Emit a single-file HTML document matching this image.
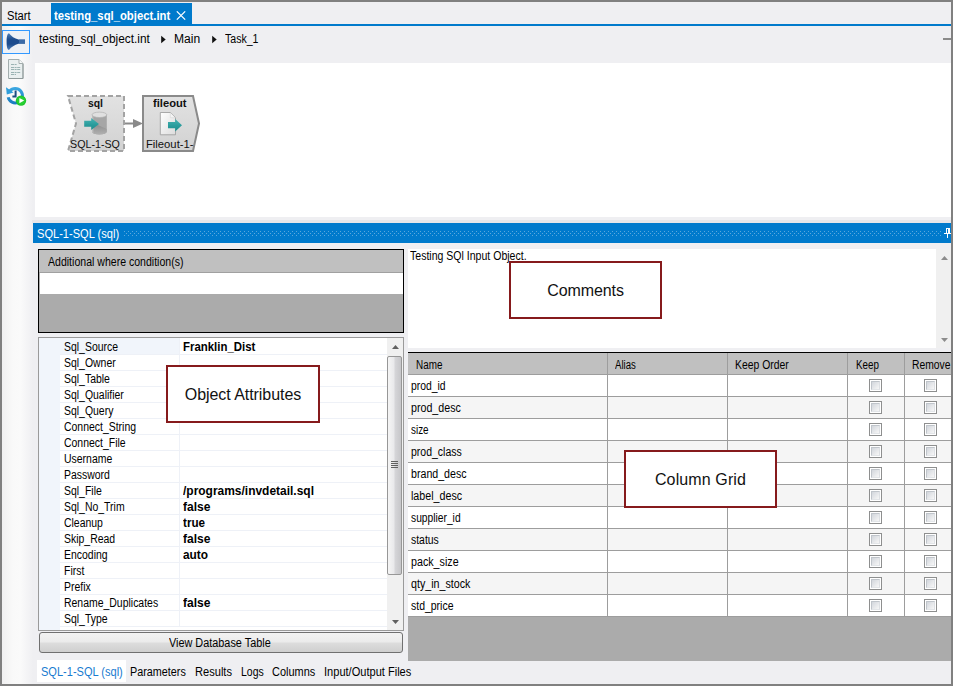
<!DOCTYPE html>
<html><head><meta charset="utf-8">
<style>
html,body{margin:0;padding:0;}
body{width:953px;height:686px;overflow:hidden;background:#efeff2;font-family:"Liberation Sans",sans-serif;position:relative;}
.a{position:absolute;}
.t{position:absolute;white-space:nowrap;line-height:1;}
.seg{font-size:12px;color:#000;}
.ms{font-size:11px;color:#000;}
.frame{left:0;top:0;width:949px;height:682px;border:2px solid #808080;pointer-events:none;z-index:50;}
.pl{position:absolute;left:64px;font-size:11px;white-space:nowrap;line-height:1;color:#000;}
.pv{position:absolute;left:183px;font-size:11px;font-weight:bold;white-space:nowrap;line-height:1;color:#000;}
.row{position:absolute;left:408px;width:543px;height:21px;border-bottom:1px solid #9d9d9d;background:#fff;}
.row.alt{background:#f5f5f5;}
.row span{position:absolute;left:2.5px;top:5px;font-size:12px;line-height:1;white-space:nowrap;}
.cb{position:absolute;top:4px;width:11px;height:11px;border:1px solid #8e8f8f;background:#fff;}
.cb i{position:absolute;left:1px;top:1px;width:9px;height:9px;box-sizing:border-box;border:1px solid;border-color:#c0c5cb #dde0e4 #e2e5e8 #c0c5cb;background:linear-gradient(135deg,#d2d6dc,#f7f7f7);}
.ann{position:absolute;border:2px solid #861a1c;background:#fff;font-size:16px;color:#111;text-align:center;box-sizing:border-box;}
</style></head><body>
<!-- left strip gradient -->
<div class="a" style="left:2px;top:26px;width:31px;height:658px;background:linear-gradient(90deg,#f0f0f1 0,#f9f9f9 35%,#fafafa 60%,#efeff2 100%);"></div>

<!-- top tabs -->
<div class="t seg" id="tStart" style="transform:scaleX(0.9312);transform-origin:0 0;left:7.3px;top:10px;">Start</div>
<div class="a" style="left:51px;top:3px;width:141px;height:21px;background:#007acc;"></div>
<div class="t seg" id="tTab" style="transform:scaleX(0.942);transform-origin:0 0;left:54.2px;top:10px;color:#fff;font-weight:bold;">testing_sql_object.int</div>
<svg class="a" style="left:176px;top:11px;" width="10" height="9" viewBox="0 0 10 9"><path d="M0.8 0.4 L9.2 8.6 M9.2 0.4 L0.8 8.6" stroke="#fff" stroke-width="1.25" fill="none"/></svg>
<div class="a" style="left:2px;top:24px;width:949px;height:2px;background:#007acc;"></div>

<!-- breadcrumb -->
<div class="t seg" id="b1" style="transform:scaleX(0.9886);transform-origin:0 0;left:39.3px;top:33px;">testing_sql_object.int</div>
<svg class="a" style="left:161px;top:35px;" width="5" height="9"><path d="M0.2 0.7 L4.7 4.5 L0.2 8.3Z" fill="#111"/></svg>
<div class="t seg" id="b2" style="transform:scaleX(1.0071);transform-origin:0 0;left:174.3px;top:33px;">Main</div>
<svg class="a" style="left:212px;top:35px;" width="5" height="9"><path d="M0.2 0.7 L4.7 4.5 L0.2 8.3Z" fill="#111"/></svg>
<div class="t seg" id="b3" style="transform:scaleX(0.8809);transform-origin:0 0;left:225.2px;top:33px;">Task_1</div>
<div class="a" style="left:943px;top:38px;width:8px;height:2px;background:#8a8a8a;"></div>

<!-- left toolbar icons -->
<div class="a" style="left:2px;top:30px;width:28px;height:24px;border:1px solid #3399ff;background:#eef1f6;box-sizing:border-box;"></div>
<svg class="a" style="left:5px;top:32px;" width="22" height="20" viewBox="5 32 22 20"><defs><linearGradient id="fg" x1="0" y1="0" x2="0" y2="1"><stop offset="0" stop-color="#4f7fb8"/><stop offset="0.35" stop-color="#1d4c8e"/><stop offset="0.65" stop-color="#1d4c8e"/><stop offset="1" stop-color="#4f7fb8"/></linearGradient></defs><path d="M9 33.3 C7.2 33.3 6.6 37 6.6 41.6 C6.6 46.2 7.2 49.9 9 49.9 Q12.5 45.4 18.5 43.7 L25 43.7 L25 39.6 L18.5 39.6 Q12.5 37.9 9 33.3Z" fill="url(#fg)"/><rect x="19" y="39.6" width="6" height="4.1" fill="#4877b2" opacity="0.7"/></svg>
<svg class="a" style="left:8px;top:59px;" width="16" height="20" viewBox="0 0 16 20"><path d="M0.5 0.5 H11 L15 4.5 V19.5 H0.5Z" fill="#e9efef" stroke="#a3adad"/><path d="M11 0.5 V4.5 H15" fill="#f8fafa" stroke="#a3adad"/><path d="M15 5 V19.5 H1" fill="none" stroke="#8f9a9a" stroke-width="1"/><g stroke="#9ab3b3" stroke-width="1" stroke-dasharray="3 0.6 2 0.6"><path d="M3 5.5H9M3 8.5H12.5M3 10.5H12.5M3 13.5H12.5M3 15.5H8"/></g></svg>
<svg class="a" style="left:5px;top:85px;" width="22" height="22" viewBox="0 0 22 22"><defs><linearGradient id="cg" x1="0" y1="0" x2="0" y2="1"><stop offset="0" stop-color="#3aa6e0"/><stop offset="1" stop-color="#1a7cc0"/></linearGradient></defs><path d="M4.6 6.2 A7.2 7.2 0 1 1 3.2 12.2" fill="none" stroke="url(#cg)" stroke-width="3"/><path d="M1 2.2 L1.8 9.6 L8.6 7.4Z" fill="#2f9edb"/><path d="M10.6 5.6 V11.4 H7.4" fill="none" stroke="#1c4c80" stroke-width="2"/><circle cx="16" cy="15.6" r="5.2" fill="#1fc42c"/><circle cx="16" cy="15.6" r="4.2" fill="#27d033"/><path d="M14.4 12.9 L19.2 15.6 L14.4 18.3Z" fill="#fff"/></svg>

<!-- canvas -->
<div class="a" style="left:35px;top:63px;width:916px;height:154px;background:#fff;"></div>
<div class="a" style="left:32px;top:220px;width:919px;height:3px;background:#e6e6e9;"></div>

<!-- flow nodes -->
<svg class="a" style="left:60px;top:90px;" width="150" height="70" viewBox="60 90 150 70">
 <defs><linearGradient id="ng" x1="0" y1="0" x2="0" y2="1"><stop offset="0" stop-color="#e2e2e2"/><stop offset="1" stop-color="#d2d2d2"/></linearGradient>
 <linearGradient id="cy" x1="0" y1="0" x2="1" y2="0"><stop offset="0" stop-color="#c8c8c8"/><stop offset="0.5" stop-color="#b0b0b0"/><stop offset="1" stop-color="#8c8c8c"/></linearGradient>
 <linearGradient id="fl" x1="0" y1="0" x2="1" y2="1"><stop offset="0" stop-color="#ffffff"/><stop offset="1" stop-color="#dcdcdc"/></linearGradient></defs>
 <path d="M68 96 H124 V151 H68 L76 123.5Z" fill="url(#ng)" stroke="#a3a3a3" stroke-width="2" stroke-dasharray="5 3"/>
 <path d="M143 96 H193 L199 123.5 L193 151 H143Z" fill="url(#ng)" stroke="#8a8a8a" stroke-width="2"/>
 <path d="M125 123.5 H135" stroke="#8a8a8a" stroke-width="2"/><path d="M133 119 L143 123.5 L133 128Z" fill="#8a8a8a"/>
 <!-- cylinder -->
 <defs><linearGradient id="cy2" x1="0" y1="0" x2="0" y2="1"><stop offset="0" stop-color="#868686"/><stop offset="1" stop-color="#b6b6b6"/></linearGradient>
 <linearGradient id="ar" x1="0" y1="0" x2="0" y2="1"><stop offset="0" stop-color="#48b4b4"/><stop offset="0.55" stop-color="#2a9c9c"/><stop offset="1" stop-color="#1f8c8c"/></linearGradient>
 <clipPath id="cyc"><path d="M92 114.8 V131.8 A7.4 2.8 0 0 0 106.8 131.8 V114.8Z"/></clipPath></defs>
 <path d="M92 114.8 V131.8 A7.4 2.8 0 0 0 106.8 131.8 V114.8Z" fill="#a6a6a6"/>
 <g clip-path="url(#cyc)"><path d="M92 122.5 L106.8 129 V136 H92Z" fill="url(#cy2)"/><rect x="92" y="112" width="1.4" height="24" fill="#c4c4c4" opacity="0.8"/></g>
 <ellipse cx="99.4" cy="114.8" rx="7.4" ry="2.7" fill="#e0e0e0" stroke="#b0b0b0" stroke-width="0.7"/>
 <path d="M84.2 120.8 H91.2 V118 L99 124 L91.2 130 V126.8 H84.2Z" fill="url(#ar)"/>
 <!-- file -->
 <path d="M160.3 112.5 H170.3 L175.5 117.7 V134.8 H160.3Z" fill="url(#fl)" stroke="#a2a2a2" stroke-width="0.9" stroke-linejoin="round"/><path d="M170.3 112.8 V117.7 H175.2" fill="#f4f4f4" stroke="#d0d0d0" stroke-width="0.5"/>
 <path d="M168 122 H175.2 V119 L182 125.2 L175.2 131.5 V128.2 H168Z" fill="url(#ar)"/>
</svg>
<div class="t" id="n1" style="transform:scaleX(0.943);transform-origin:0 0;left:87.5px;top:98px;font-size:11px;font-weight:bold;color:#111;">sql</div>
<div class="t" id="n2" style="transform:scaleX(1.0152);transform-origin:0 0;left:153.2px;top:98px;font-size:11px;font-weight:bold;color:#111;">fileout</div>
<div class="t" id="n3" style="transform:scaleX(0.9716);transform-origin:0 0;left:70.2px;top:139px;font-size:11px;color:#111;">SQL-1-SQ</div>
<div class="t" id="n4" style="transform:scaleX(1.0222);transform-origin:0 0;left:146.3px;top:139px;font-size:11px;color:#111;">Fileout-1-</div>

<!-- blue header -->
<div class="a" style="left:33px;top:223px;width:918px;height:20px;background:#007acc;"></div>
<div class="t seg" id="hdr" style="transform:scaleX(0.9233);transform-origin:0 0;left:36.5px;top:228px;color:#fff;">SQL-1-SQL (sql)</div>
<svg class="a" style="left:124px;top:230px;" width="817" height="7"><defs><pattern id="dots" width="4" height="4" patternUnits="userSpaceOnUse"><rect x="0" y="1" width="1" height="1" fill="#59a8de"/><rect x="2" y="3" width="1" height="1" fill="#59a8de"/></pattern></defs><rect width="817" height="6" fill="url(#dots)"/></svg>
<svg class="a" style="left:944px;top:228px;" width="8" height="10" shape-rendering="crispEdges"><rect x="2" y="0" width="4" height="1" fill="#fff"/><rect x="2" y="0" width="1" height="5" fill="#fff"/><rect x="4" y="0" width="2" height="5" fill="#fff"/><rect x="0" y="5" width="8" height="1" fill="#fff"/><rect x="3" y="6" width="1" height="4" fill="#fff"/></svg>

<!-- Additional where conditions -->
<div class="a" style="left:38px;top:249px;width:364px;height:82px;border:1px solid #000;background:#ababab;"></div>
<div class="a" style="left:39px;top:250px;width:364px;height:23px;background:#c0c0c0;border-bottom:1px solid #a0a0a0;box-sizing:border-box;"></div>
<div class="a" style="left:40px;top:273px;width:363px;height:21px;background:#fff;"></div>
<div class="t ms" id="awc" style="transform:scaleX(0.8793);transform-origin:0 0;font-size:12px;left:48.4px;top:256px;">Additional where condition(s)</div>

<!-- property grid -->
<div class="a" style="left:38px;top:337px;width:364px;height:292px;border:1px solid #9a9a9a;background:#fff;"></div>
<div class="a" style="left:39px;top:338px;width:21px;height:292px;background:#f1f5fb;"></div>
<div class="a" id="pg" style="left:0;top:0;"><div class="a" style="left:60px;top:339px;width:327px;height:15px;background:#fff;border-bottom:1px solid #eef1f7;"></div><div class="a" style="left:60px;top:338px;width:119px;height:16px;background:#f1f5fb;"></div><div class="pl" id="pl0" style="transform:scaleX(0.871);transform-origin:0 0;font-size:12px;top:341px;">Sql_Source</div><div class="pv" id="pv0" style="transform:scaleX(0.9522);transform-origin:0 0;font-size:12px;top:341px;">Franklin_Dist</div><div class="a" style="left:60px;top:355px;width:327px;height:15px;background:#fff;border-bottom:1px solid #eef1f7;"></div><div class="pl" id="pl1" style="transform:scaleX(0.871);transform-origin:0 0;font-size:12px;top:357px;">Sql_Owner</div><div class="a" style="left:60px;top:371px;width:327px;height:15px;background:#fff;border-bottom:1px solid #eef1f7;"></div><div class="pl" id="pl2" style="transform:scaleX(0.871);transform-origin:0 0;font-size:12px;top:373px;">Sql_Table</div><div class="a" style="left:60px;top:387px;width:327px;height:15px;background:#fff;border-bottom:1px solid #eef1f7;"></div><div class="pl" id="pl3" style="transform:scaleX(0.871);transform-origin:0 0;font-size:12px;top:389px;">Sql_Qualifier</div><div class="a" style="left:60px;top:403px;width:327px;height:15px;background:#fff;border-bottom:1px solid #eef1f7;"></div><div class="pl" id="pl4" style="transform:scaleX(0.871);transform-origin:0 0;font-size:12px;top:405px;">Sql_Query</div><div class="a" style="left:60px;top:419px;width:327px;height:15px;background:#fff;border-bottom:1px solid #eef1f7;"></div><div class="pl" id="pl5" style="transform:scaleX(0.871);transform-origin:0 0;font-size:12px;top:421px;">Connect_String</div><div class="a" style="left:60px;top:435px;width:327px;height:15px;background:#fff;border-bottom:1px solid #eef1f7;"></div><div class="pl" id="pl6" style="transform:scaleX(0.871);transform-origin:0 0;font-size:12px;top:437px;">Connect_File</div><div class="a" style="left:60px;top:451px;width:327px;height:15px;background:#fff;border-bottom:1px solid #eef1f7;"></div><div class="pl" id="pl7" style="transform:scaleX(0.871);transform-origin:0 0;font-size:12px;top:453px;">Username</div><div class="a" style="left:60px;top:467px;width:327px;height:15px;background:#fff;border-bottom:1px solid #eef1f7;"></div><div class="pl" id="pl8" style="transform:scaleX(0.871);transform-origin:0 0;font-size:12px;top:469px;">Password</div><div class="a" style="left:60px;top:483px;width:327px;height:15px;background:#fff;border-bottom:1px solid #eef1f7;"></div><div class="pl" id="pl9" style="transform:scaleX(0.871);transform-origin:0 0;font-size:12px;top:485px;">Sql_File</div><div class="pv" id="pv9" style="transform:scaleX(0.9971);transform-origin:0 0;font-size:12px;top:485px;">/programs/invdetail.sql</div><div class="a" style="left:60px;top:499px;width:327px;height:15px;background:#fff;border-bottom:1px solid #eef1f7;"></div><div class="pl" id="pl10" style="transform:scaleX(0.871);transform-origin:0 0;font-size:12px;top:501px;">Sql_No_Trim</div><div class="pv" id="pv10" style="transform:scaleX(1.0015);transform-origin:0 0;font-size:12px;top:501px;">false</div><div class="a" style="left:60px;top:515px;width:327px;height:15px;background:#fff;border-bottom:1px solid #eef1f7;"></div><div class="pl" id="pl11" style="transform:scaleX(0.871);transform-origin:0 0;font-size:12px;top:517px;">Cleanup</div><div class="pv" id="pv11" style="transform:scaleX(0.9704);transform-origin:0 0;font-size:12px;top:517px;">true</div><div class="a" style="left:60px;top:531px;width:327px;height:15px;background:#fff;border-bottom:1px solid #eef1f7;"></div><div class="pl" id="pl12" style="transform:scaleX(0.871);transform-origin:0 0;font-size:12px;top:533px;">Skip_Read</div><div class="pv" id="pv12" style="transform:scaleX(1.0015);transform-origin:0 0;font-size:12px;top:533px;">false</div><div class="a" style="left:60px;top:547px;width:327px;height:15px;background:#fff;border-bottom:1px solid #eef1f7;"></div><div class="pl" id="pl13" style="transform:scaleX(0.871);transform-origin:0 0;font-size:12px;top:549px;">Encoding</div><div class="pv" id="pv13" style="transform:scaleX(0.9904);transform-origin:0 0;font-size:12px;top:549px;">auto</div><div class="a" style="left:60px;top:563px;width:327px;height:15px;background:#fff;border-bottom:1px solid #eef1f7;"></div><div class="pl" id="pl14" style="transform:scaleX(0.871);transform-origin:0 0;font-size:12px;top:565px;">First</div><div class="a" style="left:60px;top:579px;width:327px;height:15px;background:#fff;border-bottom:1px solid #eef1f7;"></div><div class="pl" id="pl15" style="transform:scaleX(0.871);transform-origin:0 0;font-size:12px;top:581px;">Prefix</div><div class="a" style="left:60px;top:595px;width:327px;height:15px;background:#fff;border-bottom:1px solid #eef1f7;"></div><div class="pl" id="pl16" style="transform:scaleX(0.871);transform-origin:0 0;font-size:12px;top:597px;">Rename_Duplicates</div><div class="pv" id="pv16" style="transform:scaleX(1.0015);transform-origin:0 0;font-size:12px;top:597px;">false</div><div class="a" style="left:60px;top:611px;width:327px;height:15px;background:#fff;border-bottom:1px solid #eef1f7;"></div><div class="pl" id="pl17" style="transform:scaleX(0.871);transform-origin:0 0;font-size:12px;top:613px;">Sql_Type</div><div class="a" style="left:179px;top:338px;width:1px;height:288px;background:#eef1f7;"></div></div>

<!-- scrollbar of property grid -->
<div class="a" style="left:387px;top:338px;width:16px;height:292px;background:#f0f0f0;"></div>
<div class="a" style="left:387px;top:356px;width:13px;height:217px;border:1px solid #979797;border-radius:2px;background:linear-gradient(90deg,#f5f5f5 0,#e9e9eb 45%,#d5d5d8 55%,#c6c6c9 100%);"></div>
<svg class="a" style="left:392px;top:345px;" width="7" height="4"><path d="M0 4 L3.5 0 L7 4Z" fill="#606060"/></svg>
<svg class="a" style="left:392px;top:620px;" width="7" height="4"><path d="M0 0 L3.5 4 L7 0Z" fill="#606060"/></svg>
<div class="a" style="left:391px;top:461px;width:7px;height:1px;background:#606060;box-shadow:0 2px 0 #606060,0 4px 0 #606060,0 6px 0 #606060;"></div>

<!-- button -->
<div class="a" style="left:39px;top:632px;width:362px;height:19px;border:1px solid #707070;border-radius:3px;background:linear-gradient(#f2f2f2 0,#ebebeb 48%,#dddddd 52%,#cfcfcf 100%);"></div>
<div class="t ms" id="btn" style="transform:scaleX(0.9055);transform-origin:0 0;font-size:12px;left:168.8px;top:637px;">View Database Table</div>

<!-- comments -->
<div class="a" style="left:408px;top:249px;width:543px;height:99px;background:#fff;"></div>
<div class="a" style="left:936px;top:249px;width:15px;height:99px;background:#f0f0f0;"></div>
<svg class="a" style="left:941px;top:256px;" width="7" height="4"><path d="M0 4 L3.5 0 L7 4Z" fill="#8c8c8c"/></svg>
<svg class="a" style="left:941px;top:338px;" width="7" height="4"><path d="M0 0 L3.5 4 L7 0Z" fill="#8c8c8c"/></svg>
<div class="t ms" id="cm" style="transform:scaleX(0.8784);transform-origin:0 0;font-size:12px;left:409.9px;top:250px;">Testing SQl Input Object.</div>

<!-- data grid -->
<div class="a" style="left:408px;top:352px;width:543px;height:309px;background:#ababab;border-top:1px solid #000;box-sizing:border-box;"></div>
<div class="a" style="left:408px;top:353px;width:543px;height:21px;background:#c0c0c0;border-bottom:1px solid #9d9d9d;"></div>
<div id="grid"><div class="row" style="top:375px;"><span id="r0" style="transform:scaleX(0.8643);transform-origin:0 0;font-size:12px;">prod_id</span><div class="cb" style="left:461px;"><i></i></div><div class="cb" style="left:516px;"><i></i></div></div><div class="row alt" style="top:397px;"><span id="r1" style="transform:scaleX(0.8885);transform-origin:0 0;font-size:12px;">prod_desc</span><div class="cb" style="left:461px;"><i></i></div><div class="cb" style="left:516px;"><i></i></div></div><div class="row" style="top:419px;"><span id="r2" style="transform:scaleX(0.8246);transform-origin:0 0;font-size:12px;">size</span><div class="cb" style="left:461px;"><i></i></div><div class="cb" style="left:516px;"><i></i></div></div><div class="row alt" style="top:441px;"><span id="r3" style="transform:scaleX(0.8737);transform-origin:0 0;font-size:12px;">prod_class</span><div class="cb" style="left:461px;"><i></i></div><div class="cb" style="left:516px;"><i></i></div></div><div class="row" style="top:463px;"><span id="r4" style="transform:scaleX(0.8865);transform-origin:0 0;font-size:12px;">brand_desc</span><div class="cb" style="left:461px;"><i></i></div><div class="cb" style="left:516px;"><i></i></div></div><div class="row alt" style="top:485px;"><span id="r5" style="transform:scaleX(0.8906);transform-origin:0 0;font-size:12px;">label_desc</span><div class="cb" style="left:461px;"><i></i></div><div class="cb" style="left:516px;"><i></i></div></div><div class="row" style="top:507px;"><span id="r6" style="transform:scaleX(0.8545);transform-origin:0 0;font-size:12px;">supplier_id</span><div class="cb" style="left:461px;"><i></i></div><div class="cb" style="left:516px;"><i></i></div></div><div class="row alt" style="top:529px;"><span id="r7" style="transform:scaleX(0.8683);transform-origin:0 0;font-size:12px;">status</span><div class="cb" style="left:461px;"><i></i></div><div class="cb" style="left:516px;"><i></i></div></div><div class="row" style="top:551px;"><span id="r8" style="transform:scaleX(0.8918);transform-origin:0 0;font-size:12px;">pack_size</span><div class="cb" style="left:461px;"><i></i></div><div class="cb" style="left:516px;"><i></i></div></div><div class="row alt" style="top:573px;"><span id="r9" style="transform:scaleX(0.8905);transform-origin:0 0;font-size:12px;">qty_in_stock</span><div class="cb" style="left:461px;"><i></i></div><div class="cb" style="left:516px;"><i></i></div></div><div class="row" style="top:595px;"><span id="r10" style="transform:scaleX(0.8726);transform-origin:0 0;font-size:12px;">std_price</span><div class="cb" style="left:461px;"><i></i></div><div class="cb" style="left:516px;"><i></i></div></div><div class="a" style="left:607px;top:353px;width:1px;height:264px;background:#9d9d9d;"></div><div class="a" style="left:727px;top:353px;width:1px;height:264px;background:#9d9d9d;"></div><div class="a" style="left:847px;top:353px;width:1px;height:264px;background:#9d9d9d;"></div><div class="a" style="left:904px;top:353px;width:1px;height:264px;background:#9d9d9d;"></div><div class="t ms" id="h0" style="transform:scaleX(0.8246);transform-origin:0 0;font-size:12px;left:416.4px;top:359px;">Name</div><div class="t ms" id="h1" style="transform:scaleX(0.7995);transform-origin:0 0;font-size:12px;left:614.8px;top:359px;">Alias</div><div class="t ms" id="h2" style="transform:scaleX(0.8655);transform-origin:0 0;font-size:12px;left:735.2px;top:359px;">Keep Order</div><div class="t ms" id="h3" style="transform:scaleX(0.8169);transform-origin:0 0;font-size:12px;left:855.6px;top:359px;">Keep</div><div class="t ms" id="h4" style="transform:scaleX(0.8593);transform-origin:0 0;font-size:12px;left:912.2px;top:359px;">Remove</div></div>

<!-- bottom tabs -->
<div class="a" style="left:37px;top:660px;width:89px;height:22px;background:#fff;"></div>
<div class="t seg" id="bt1" style="transform:scaleX(0.9199);transform-origin:0 0;left:40.5px;top:666px;color:#187bd0;">SQL-1-SQL (sql)</div>
<div class="t seg" id="bt2" style="transform:scaleX(0.8995);transform-origin:0 0;left:130.4px;top:666px;">Parameters</div>
<div class="t seg" id="bt3" style="transform:scaleX(0.9246);transform-origin:0 0;left:195.3px;top:666px;">Results</div>
<div class="t seg" id="bt4" style="transform:scaleX(0.872);transform-origin:0 0;left:240.6px;top:666px;">Logs</div>
<div class="t seg" id="bt5" style="transform:scaleX(0.9122);transform-origin:0 0;left:272.2px;top:666px;">Columns</div>
<div class="t seg" id="bt6" style="transform:scaleX(0.9217);transform-origin:0 0;left:323.8px;top:666px;">Input/Output Files</div>

<!-- annotations -->
<div class="ann" style="left:509px;top:261px;width:153px;height:58px;line-height:56px;"><span id="an1" style="letter-spacing:-0.095px;">Comments</span></div>
<div class="ann" style="left:166px;top:365px;width:154px;height:58px;line-height:56px;"><span id="an2" style="letter-spacing:-0.052px;">Object Attributes</span></div>
<div class="ann" style="left:624px;top:450px;width:153px;height:58px;line-height:56px;"><span id="an3" style="letter-spacing:0.117px;">Column Grid</span></div>

<div class="a frame"></div>
</body></html>
